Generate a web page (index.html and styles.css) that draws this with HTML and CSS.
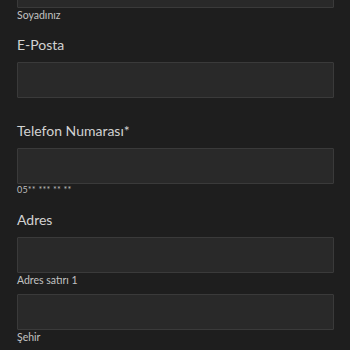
FILE: index.html
```html
<!DOCTYPE html>
<html lang="tr">
<head>
    <meta charset="UTF-8">
    <meta name="viewport" content="width=device-width, initial-scale=1.0">
    <title>İletişim Bilgileri</title>
    <link rel="stylesheet" href="styles.css">
</head>
<body>
    <form class="form">
        <div class="field field-top">
            <input type="text" id="lastName" class="field-input">
            <p class="field-desc">Soyadınız</p>
        </div>

        <div class="field field-plain">
            <label for="email" class="field-label">E-Posta</label>
            <input type="email" id="email" class="field-input">
        </div>

        <div class="field">
            <label for="phone" class="field-label">Telefon Numarası*</label>
            <input type="tel" id="phone" class="field-input">
            <p class="field-hint">05** *** ** **</p>
        </div>

        <div class="field">
            <label for="address1" class="field-label">Adres</label>
            <input type="text" id="address1" class="field-input">
            <p class="field-desc">Adres satırı 1</p>
            <input type="text" id="city" class="field-input field-input-next">
            <p class="field-desc">Şehir</p>
        </div>
    </form>
</body>
</html>
```

FILE: styles.css
```css
body {
    margin: 0;
    background-color: #1e1e1e;
    font-family: Lato, "Open Sans", sans-serif;
    color: #d0d0d0;
    overflow: hidden;
}
.form {
    padding: 0 16px 0 17px;
    margin-top: -28px;
}
.field {
    margin-bottom: 16px;
}
.field-top {
    margin-bottom: 14px;
}
.field-plain {
    margin-bottom: 24px;
}
.field-label {
    display: block;
    font-size: 14px;
    line-height: 18px;
    margin-bottom: 8px;
    color: #d2d2d2;
}
.field-input {
    display: block;
    width: 100%;
    height: 36px;
    margin: 0;
    padding: 0 10px;
    box-sizing: border-box;
    background-color: #292929;
    border: 1px solid #3a3a3a;
    border-radius: 1px;
    color: #eee;
}
.field-input-next {
    margin-top: 7px;
}
.field-desc {
    margin: 0;
    font-size: 10.5px;
    line-height: 14px;
    color: #c2c2c2;
}
.field-hint {
    margin: 0;
    font-size: 9px;
    line-height: 11px;
    letter-spacing: 0.2px;
    color: #bdbdbd;
}
```
